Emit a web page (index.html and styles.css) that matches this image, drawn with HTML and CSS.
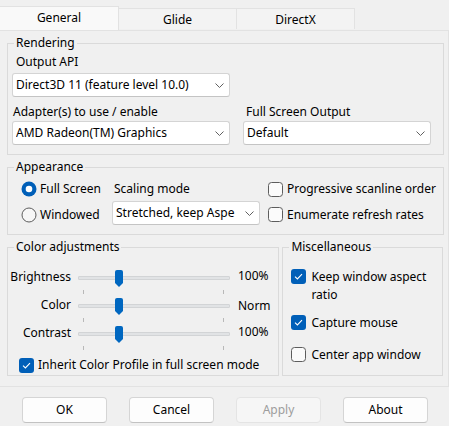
FILE: index.html
```html
<!DOCTYPE html>
<html>
<head>
<meta charset="utf-8">
<link rel="stylesheet" href="styles.css">
</head>
<body>
<div class="window">
  <div class="tabs">
    <div class="tab active">General</div>
    <div class="tab">Glide</div>
    <div class="tab">DirectX</div>
  </div>
  <div class="page">
    <fieldset class="group rendering">
      <legend>Rendering</legend>
      <div class="render-grid">
        <div class="field-label lbl-output">Output API</div>
        <div></div>
        <div class="select sel-first"><span class="sel-text">Direct3D 11 (feature level 10.0)</span><svg class="chev" width="9" height="5" viewBox="0 0 9 5"><path d="M0.5 0.5 L4.5 4.5 L8.5 0.5" fill="none" stroke="#606060" stroke-width="1"/></svg></div>
        <div></div>
        <div class="field-label lbl-adapter">Adapter(s) to use / enable</div>
        <div class="field-label lbl-fs">Full Screen Output</div>
        <div class="select sel-second"><span class="sel-text">AMD Radeon(TM) Graphics</span><svg class="chev" width="9" height="5" viewBox="0 0 9 5"><path d="M0.5 0.5 L4.5 4.5 L8.5 0.5" fill="none" stroke="#606060" stroke-width="1"/></svg></div>
        <div class="select sel-second"><span class="sel-text">Default</span><svg class="chev" width="9" height="5" viewBox="0 0 9 5"><path d="M0.5 0.5 L4.5 4.5 L8.5 0.5" fill="none" stroke="#606060" stroke-width="1"/></svg></div>
      </div>
    </fieldset>

    <fieldset class="group appearance">
      <legend>Appearance</legend>
      <div class="app-grid">
        <div class="option">
          <svg class="radio" width="16" height="16" viewBox="0 0 16 16"><circle cx="8" cy="8" r="7.5" fill="#005fb8"/><circle cx="8" cy="8" r="3.3" fill="#fff"/></svg>
          <span>Full Screen</span>
        </div>
        <div class="scaling-label">Scaling mode</div>
        <div class="option col3">
          <svg class="check" width="15" height="15" viewBox="0 0 15 15"><rect x="0.5" y="0.5" width="14" height="14" rx="3" fill="#fbfbfb" stroke="#5d5d5d"/></svg>
          <span>Progressive scanline order</span>
        </div>
        <div class="option row2">
          <svg class="radio" width="16" height="16" viewBox="0 0 16 16"><circle cx="8" cy="8" r="7" fill="#f7f7f7" stroke="#5d5d5d"/></svg>
          <span>Windowed</span>
        </div>
        <div class="select sel-scaling"><span class="sel-text">Stretched, keep Aspe</span><svg class="chev" width="9" height="5" viewBox="0 0 9 5"><path d="M0.5 0.5 L4.5 4.5 L8.5 0.5" fill="none" stroke="#606060" stroke-width="1"/></svg></div>
        <div class="option col3 row2">
          <svg class="check" width="15" height="15" viewBox="0 0 15 15"><rect x="0.5" y="0.5" width="14" height="14" rx="3" fill="#fbfbfb" stroke="#5d5d5d"/></svg>
          <span>Enumerate refresh rates</span>
        </div>
      </div>
    </fieldset>

    <div class="lower">
      <fieldset class="group color">
        <legend>Color adjustments</legend>
        <div class="sliders">
          <div class="slider-row">
            <div class="slider-label">Brightness</div>
            <div class="slider">
              <div class="track"></div>
              <svg class="thumb" style="left:37px" width="8" height="17" viewBox="0 0 8 17"><path d="M0 2 Q0 0 2 0 H6 Q8 0 8 2 V13 L4 17 L0 13 Z" fill="#0067c0"/></svg>
              <div class="tick tick-left"></div>
              <div class="tick tick-right"></div>
            </div>
            <div class="slider-value">100%</div>
          </div>
          <div class="slider-row">
            <div class="slider-label">Color</div>
            <div class="slider">
              <div class="track"></div>
              <svg class="thumb" style="left:37px" width="8" height="17" viewBox="0 0 8 17"><path d="M0 2 Q0 0 2 0 H6 Q8 0 8 2 V13 L4 17 L0 13 Z" fill="#0067c0"/></svg>
              <div class="tick tick-left"></div>
              <div class="tick tick-right"></div>
            </div>
            <div class="slider-value low">Norm</div>
          </div>
          <div class="slider-row">
            <div class="slider-label">Contrast</div>
            <div class="slider">
              <div class="track"></div>
              <svg class="thumb" style="left:37px" width="8" height="17" viewBox="0 0 8 17"><path d="M0 2 Q0 0 2 0 H6 Q8 0 8 2 V13 L4 17 L0 13 Z" fill="#0067c0"/></svg>
              <div class="tick tick-left"></div>
              <div class="tick tick-right"></div>
            </div>
            <div class="slider-value">100%</div>
          </div>
        </div>
        <div class="option inherit">
          <svg class="check" width="15" height="15" viewBox="0 0 15 15"><rect x="0" y="0" width="15" height="15" rx="3" fill="#005fb8"/><path d="M4 7.6 L6.4 10 L11 5.2" fill="none" stroke="#fff" stroke-width="1.1"/></svg>
          <span>Inherit Color Profile in full screen mode</span>
        </div>
      </fieldset>

      <fieldset class="group misc">
        <legend>Miscellaneous</legend>
        <div class="misc-list">
          <div class="option misc-item first">
            <svg class="check" width="15" height="15" viewBox="0 0 15 15"><rect x="0" y="0" width="15" height="15" rx="3" fill="#005fb8"/><path d="M4 7.6 L6.4 10 L11 5.2" fill="none" stroke="#fff" stroke-width="1.1"/></svg>
            <span>Keep window aspect<br>ratio</span>
          </div>
          <div class="option misc-item second">
            <svg class="check" width="15" height="15" viewBox="0 0 15 15"><rect x="0" y="0" width="15" height="15" rx="3" fill="#005fb8"/><path d="M4 7.6 L6.4 10 L11 5.2" fill="none" stroke="#fff" stroke-width="1.1"/></svg>
            <span>Capture mouse</span>
          </div>
          <div class="option misc-item third">
            <svg class="check" width="15" height="15" viewBox="0 0 15 15"><rect x="0.5" y="0.5" width="14" height="14" rx="3" fill="#fbfbfb" stroke="#5d5d5d"/></svg>
            <span>Center app window</span>
          </div>
        </div>
      </fieldset>
    </div>
  </div>

  <div class="buttons">
    <div class="button">OK</div>
    <div class="button">Cancel</div>
    <div class="button disabled">Apply</div>
    <div class="button">About</div>
  </div>
</div>
</body>
</html>
```
FILE: styles.css
```css
* {
  box-sizing: border-box;
}

html,
body {
  margin: 0;
  padding: 0;
}

body {
  width: 449px;
  height: 426px;
  overflow: hidden;
  background: #f0f0f0;
  color: #000;
  font-family: "Segoe UI", "Noto Sans", sans-serif;
  font-size: 12px;
  line-height: 16px;
}

/* Tabs */
.tabs {
  display: flex;
  align-items: flex-end;
  height: 30px;
}

.tab {
  width: 118px;
  height: 21px;
  margin-bottom: 1px;
  padding-top: 2px;
  display: flex;
  align-items: center;
  justify-content: center;
  background: #f3f3f3;
  border: 1px solid #e2e2e2;
  border-left: none;
  border-bottom: none;
}

.tab.active {
  width: 119px;
  height: 24px;
  margin-bottom: 0;
  padding-top: 0;
  padding-bottom: 2px;
  background: #f9f9f9;
}

/* Page */
.page {
  height: 357px;
  padding: 4px 5px 0 7px;
  border: 1px solid #e2e2e2;
  border-left: none;
  background: #f0f0f0;
}

.group {
  margin: 0;
  padding: 0;
  min-width: 0;
  border: 1px solid #dadada;
}

.group legend {
  height: 16px;
  margin-left: 6px;
  padding: 0 2px;
  line-height: 16px;
}

.rendering {
  width: 437px;
}

.render-grid {
  display: grid;
  grid-template-columns: 218px 188px;
  column-gap: 13px;
  padding: 3px 0 9px 4px;
}

.field-label {
  height: 16px;
  white-space: nowrap;
}

.lbl-output {
  padding-left: 4px;
}

.lbl-adapter {
  margin-top: 7px;
  padding-left: 1px;
}

.lbl-fs {
  margin-top: 7px;
  padding-left: 3px;
}

.select {
  display: flex;
  align-items: center;
  height: 24px;
  padding: 0 5px 0 3px;
  background: #fff;
  border: 1px solid #d4d4d4;
  border-bottom-color: #c4c4c4;
  border-radius: 3px;
  white-space: nowrap;
  overflow: hidden;
}

.sel-text {
  flex: 1;
  overflow: hidden;
  margin-right: 6px;
}

.chev {
  flex: none;
}

.sel-first {
  margin-top: 3px;
}

.sel-second {
  margin-top: 1px;
}

/* Appearance */
.appearance {
  width: 437px;
  margin-top: 4px;
}

.app-grid {
  display: grid;
  grid-template-columns: 91px 148px auto;
  grid-template-rows: 22px 24px;
  row-gap: 1px;
  padding: 3px 0 9px 13px;
}

.option {
  display: flex;
  align-items: center;
  gap: 4px;
  white-space: nowrap;
}

.option .radio {
  flex: none;
  margin-right: -1px;
}

.option .check {
  flex: none;
}

.row2 {
  padding-top: 3px;
}

.col3 {
  margin-left: 8px;
}

.scaling-label {
  display: flex;
  align-items: center;
  padding-left: 2px;
}

.sel-scaling {
  height: 24px;
}

/* Lower groups */
.lower {
  display: flex;
  gap: 3px;
  margin-top: 4px;
}

.color {
  width: 273px;
  padding-bottom: 2px;
}

.sliders {
  padding-top: 14px;
}

.slider-row {
  display: grid;
  grid-template-columns: 63px 152px auto;
  column-gap: 7px;
  height: 28px;
}

.slider-label {
  text-align: right;
  white-space: nowrap;
}

.slider-value {
  margin-left: 1px;
  margin-top: -1px;
}

.slider-value.low {
  margin-top: 1px;
}

.slider {
  position: relative;
  height: 28px;
}

.track {
  margin-top: 7px;
  height: 4px;
  background: #e1e3e5;
  border: 1px solid #d2d4d6;
  border-radius: 1px;
}

.thumb {
  position: absolute;
  top: 1px;
}

.tick {
  position: absolute;
  top: 21px;
  width: 1px;
  height: 4px;
  background: #b8b8b8;
}

.tick-left {
  left: 5px;
}

.tick-right {
  right: 6px;
}

.inherit {
  margin-top: 4px;
  padding-left: 11px;
  height: 16px;
}

.misc {
  width: 161px;
}

.misc-list {
  padding: 13px 0 0 8px;
}

.misc-item {
  align-items: flex-start;
  line-height: 18px;
  gap: 5px;
}

.misc-item .check {
  margin-top: 1px;
}

.misc-item.second {
  margin-top: 10px;
}

.misc-item.third {
  margin-top: 14px;
}

/* Buttons */
.buttons {
  display: flex;
  gap: 22px;
  padding: 10px 0 0 22px;
}

.button {
  width: 85px;
  height: 26px;
  display: flex;
  align-items: center;
  justify-content: center;
  background: #fdfdfd;
  border: 1px solid #d5d5d5;
  border-bottom-color: #c2c2c2;
  border-radius: 4px;
}

.button.disabled {
  background: #f6f6f6;
  border-color: #e4e4e4;
  color: #9d9d9d;
}
```
